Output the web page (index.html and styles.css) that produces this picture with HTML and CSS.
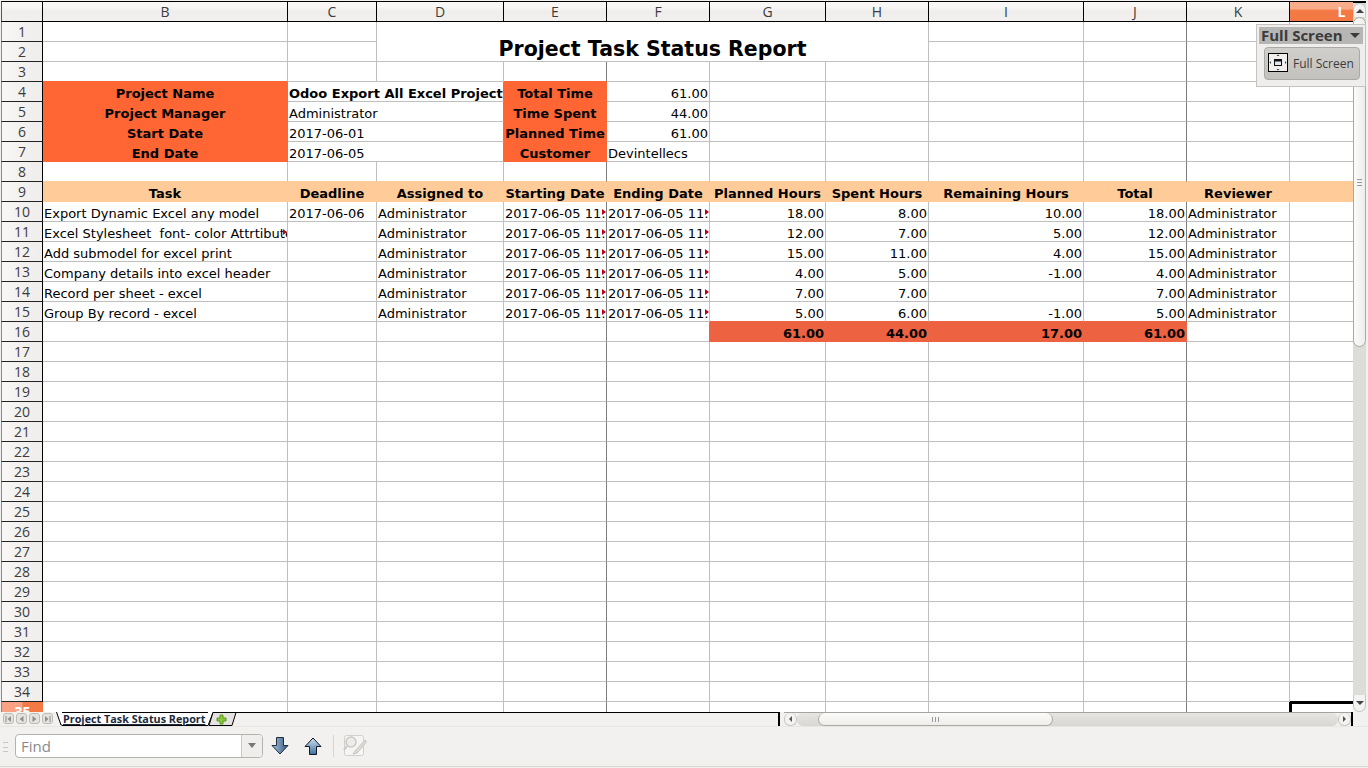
FILE: index.html
```html
<!DOCTYPE html>
<html lang="en">
<head>
  <meta charset="UTF-8">
  <title>Project Task Status Report</title>
  <link rel="stylesheet" href="styles.css">
</head>
<body>
<div class="app">
  <div class="main">
    <div class="sheet">
      <table class="grid">
        <colgroup>
          <col class="w-a"><col class="w-b"><col class="w-c"><col class="w-d"><col class="w-n"><col class="w-n">
          <col class="w-g"><col class="w-n"><col class="w-i"><col class="w-n"><col class="w-n"><col class="w-n">
        </colgroup>
        <thead>
          <tr>
            <th class="corner"></th><th>B</th><th>C</th><th>D</th><th>E</th><th>F</th><th>G</th><th>H</th><th>I</th><th>J</th><th>K</th><th class="col-sel">L</th>
          </tr>
        </thead>
        <tbody>
          <tr><th>1</th><td></td><td></td><td class="title" colspan="5" rowspan="2">Project Task Status Report</td><td></td><td class="dk"></td><td></td><td></td></tr>
          <tr><th>2</th><td></td><td></td><td></td><td class="dk"></td><td></td><td></td></tr>
          <tr><th>3</th><td class="under-org"></td><td></td><td></td><td class="dk under-org"></td><td></td><td></td><td></td><td></td><td class="dk"></td><td></td><td></td></tr>
          <tr><th>4</th><td class="org mid bold">Project Name</td><td class="bold right-org" colspan="2">Odoo Export All Excel Project</td><td class="org mid bold">Total Time</td><td class="num">61.00</td><td></td><td></td><td></td><td class="dk"></td><td></td><td></td></tr>
          <tr><th>5</th><td class="org mid bold">Project Manager</td><td class="right-org" colspan="2">Administrator</td><td class="org mid bold">Time Spent</td><td class="num">44.00</td><td></td><td></td><td></td><td class="dk"></td><td></td><td></td></tr>
          <tr><th>6</th><td class="org mid bold">Start Date</td><td class="right-org" colspan="2">2017-06-01</td><td class="org mid bold">Planned Time</td><td class="num">61.00</td><td></td><td></td><td></td><td class="dk"></td><td></td><td></td></tr>
          <tr><th>7</th><td class="org mid bold">End Date</td><td class="right-org" colspan="2">2017-06-05</td><td class="org mid bold">Customer</td><td>Devintellecs</td><td></td><td></td><td></td><td class="dk"></td><td></td><td></td></tr>
          <tr class="under-pch"><th>8</th><td></td><td></td><td></td><td class="dk"></td><td></td><td></td><td></td><td></td><td class="dk"></td><td></td><td></td></tr>
          <tr class="band"><th>9</th><td>Task</td><td>Deadline</td><td>Assigned to</td><td>Starting Date</td><td>Ending Date</td><td>Planned Hours</td><td>Spent Hours</td><td>Remaining Hours</td><td>Total</td><td>Reviewer</td><td></td></tr>
          <tr><th>10</th><td>Export Dynamic Excel any model</td><td>2017-06-06</td><td>Administrator</td><td class="dk clip">2017-06-05 11:30:00</td><td class="clip">2017-06-05 11:30:00</td><td class="num">18.00</td><td class="num">8.00</td><td class="num">10.00</td><td class="dk num">18.00</td><td>Administrator</td><td></td></tr>
          <tr><th>11</th><td class="clip">Excel Stylesheet  font- color Attrtibute</td><td></td><td>Administrator</td><td class="dk clip">2017-06-05 11:30:00</td><td class="clip">2017-06-05 11:30:00</td><td class="num">12.00</td><td class="num">7.00</td><td class="num">5.00</td><td class="dk num">12.00</td><td>Administrator</td><td></td></tr>
          <tr><th>12</th><td>Add submodel for excel print</td><td></td><td>Administrator</td><td class="dk clip">2017-06-05 11:30:00</td><td class="clip">2017-06-05 11:30:00</td><td class="num">15.00</td><td class="num">11.00</td><td class="num">4.00</td><td class="dk num">15.00</td><td>Administrator</td><td></td></tr>
          <tr><th>13</th><td>Company details into excel header</td><td></td><td>Administrator</td><td class="dk clip">2017-06-05 11:30:00</td><td class="clip">2017-06-05 11:30:00</td><td class="num">4.00</td><td class="num">5.00</td><td class="num">-1.00</td><td class="dk num">4.00</td><td>Administrator</td><td></td></tr>
          <tr><th>14</th><td>Record per sheet - excel</td><td></td><td>Administrator</td><td class="dk clip">2017-06-05 11:30:00</td><td class="clip">2017-06-05 11:30:00</td><td class="num">7.00</td><td class="num">7.00</td><td class="num"></td><td class="dk num">7.00</td><td>Administrator</td><td></td></tr>
          <tr><th>15</th><td>Group By record - excel</td><td></td><td>Administrator</td><td class="dk clip">2017-06-05 11:30:00</td><td class="clip">2017-06-05 11:30:00</td><td class="num under-tot">5.00</td><td class="num under-tot">6.00</td><td class="num under-tot">-1.00</td><td class="dk num under-tot">5.00</td><td>Administrator</td><td></td></tr>
          <tr><th>16</th><td></td><td></td><td></td><td class="dk"></td><td class="right-tot"></td><td class="tot num bold">61.00</td><td class="tot num bold">44.00</td><td class="tot num bold">17.00</td><td class="tot num bold">61.00</td><td></td><td></td></tr>
          <tr><th>17</th><td></td><td></td><td></td><td class="dk"></td><td></td><td></td><td></td><td></td><td class="dk"></td><td></td><td></td></tr>
          <tr><th>18</th><td></td><td></td><td></td><td class="dk"></td><td></td><td></td><td></td><td></td><td class="dk"></td><td></td><td></td></tr>
          <tr><th>19</th><td></td><td></td><td></td><td class="dk"></td><td></td><td></td><td></td><td></td><td class="dk"></td><td></td><td></td></tr>
          <tr><th>20</th><td></td><td></td><td></td><td class="dk"></td><td></td><td></td><td></td><td></td><td class="dk"></td><td></td><td></td></tr>
          <tr><th>21</th><td></td><td></td><td></td><td class="dk"></td><td></td><td></td><td></td><td></td><td class="dk"></td><td></td><td></td></tr>
          <tr><th>22</th><td></td><td></td><td></td><td class="dk"></td><td></td><td></td><td></td><td></td><td class="dk"></td><td></td><td></td></tr>
          <tr><th>23</th><td></td><td></td><td></td><td class="dk"></td><td></td><td></td><td></td><td></td><td class="dk"></td><td></td><td></td></tr>
          <tr><th>24</th><td></td><td></td><td></td><td class="dk"></td><td></td><td></td><td></td><td></td><td class="dk"></td><td></td><td></td></tr>
          <tr><th>25</th><td></td><td></td><td></td><td class="dk"></td><td></td><td></td><td></td><td></td><td class="dk"></td><td></td><td></td></tr>
          <tr><th>26</th><td></td><td></td><td></td><td class="dk"></td><td></td><td></td><td></td><td></td><td class="dk"></td><td></td><td></td></tr>
          <tr><th>27</th><td></td><td></td><td></td><td class="dk"></td><td></td><td></td><td></td><td></td><td class="dk"></td><td></td><td></td></tr>
          <tr><th>28</th><td></td><td></td><td></td><td class="dk"></td><td></td><td></td><td></td><td></td><td class="dk"></td><td></td><td></td></tr>
          <tr><th>29</th><td></td><td></td><td></td><td class="dk"></td><td></td><td></td><td></td><td></td><td class="dk"></td><td></td><td></td></tr>
          <tr><th>30</th><td></td><td></td><td></td><td class="dk"></td><td></td><td></td><td></td><td></td><td class="dk"></td><td></td><td></td></tr>
          <tr><th>31</th><td></td><td></td><td></td><td class="dk"></td><td></td><td></td><td></td><td></td><td class="dk"></td><td></td><td></td></tr>
          <tr><th>32</th><td></td><td></td><td></td><td class="dk"></td><td></td><td></td><td></td><td></td><td class="dk"></td><td></td><td></td></tr>
          <tr><th>33</th><td></td><td></td><td></td><td class="dk"></td><td></td><td></td><td></td><td></td><td class="dk"></td><td></td><td></td></tr>
          <tr><th>34</th><td></td><td></td><td></td><td class="dk"></td><td></td><td></td><td></td><td></td><td class="dk"></td><td></td><td class="above-sel"></td></tr>
          <tr><th class="row-sel">35</th><td></td><td></td><td></td><td class="dk"></td><td></td><td></td><td></td><td></td><td class="dk"></td><td></td><td class="cell-sel"></td></tr>
        </tbody>
      </table>
    </div>
    <div class="vscroll">
      <div class="v-btn"><span class="tri-up"></span></div>
      <div class="v-thumb"><span class="grip-h"></span></div>
      <div class="v-trough"></div>
      <div class="v-btn v-btn-down"><span class="tri-down"></span></div>
    </div>
  </div>

  <div class="tabrow">
    <div class="strip">
      <div class="nav">
        <span class="nav-btn"><svg width="9" height="10" viewBox="0 0 9 10"><path d="M1.5 2h1v6h-1Z M7 2v6L3.5 5Z" fill="#8f8e8a"/></svg></span>
        <span class="nav-btn"><svg width="9" height="10" viewBox="0 0 9 10"><path d="M6.5 2v6L2.5 5Z" fill="#8f8e8a"/></svg></span>
        <span class="nav-btn"><svg width="9" height="10" viewBox="0 0 9 10"><path d="M2.5 2v6L6.5 5Z" fill="#8f8e8a"/></svg></span>
        <span class="nav-btn"><svg width="9" height="10" viewBox="0 0 9 10"><path d="M6.5 2h1v6h-1Z M2 2v6L5.5 5Z" fill="#8f8e8a"/></svg></span>
      </div>
      <svg class="slope" width="6" height="14" viewBox="0 0 6 14"><path d="M0 0 L5 13 L6 13 L6 0 Z" fill="#fff"/><path d="M0.5 0 L5 13 L6 13" fill="none" stroke="#000"/></svg>
      <span class="tab">Project Task Status Report</span>
      <svg class="add" width="32" height="14" viewBox="0 0 32 14">
        <path d="M0 13 L5 0 L0 0 Z" fill="#fff"/>
        <path d="M0 13.5 L5 0.5" fill="none" stroke="#000"/>
        <path d="M5 0.5 L28 0.5 L24 13.5 L1 13.5 Z" fill="#e4e3e0" stroke="#000"/>
        <path d="M12 3 h3 v3 h3 v3 h-3 v3 h-3 v-3 h-3 v-3 h3 Z" fill="#8cc63f" stroke="#5c9a22"/>
      </svg>
    </div>
    <div class="hscroll">
      <div class="h-btn"><span class="tri-left"></span></div>
      <div class="h-trough"><div class="h-thumb"><span class="grip-v"></span></div></div>
      <div class="h-btn"><span class="tri-right"></span></div>
    </div>
    <div class="tab-end"></div>
  </div>

  <div class="findbar">
    <span class="dots"></span>
    <div class="find">
      <span class="find-text">Find</span>
      <span class="find-drop"><span class="tri-down dim"></span></span>
    </div>
    <svg class="ico-down" width="18" height="18" viewBox="0 0 18 18">
      <defs>
        <linearGradient id="blueDown" x1="0" y1="0" x2="1" y2="0"><stop offset="0" stop-color="#a9c4dd"/><stop offset="1" stop-color="#33597f"/></linearGradient>
        <linearGradient id="blueUp" x1="0" y1="1" x2="0" y2="0"><stop offset="0" stop-color="#3f6f9d"/><stop offset="1" stop-color="#cfe2f2"/></linearGradient>
      </defs>
      <path d="M5.5 0.5 H12.5 V8.5 H17 L9 17 L1 8.5 H5.5 Z" fill="url(#blueDown)" stroke="#1f2d3d"/>
    </svg>
    <svg class="ico-up" width="18" height="18" viewBox="0 0 18 18">
      <path d="M5.5 17.5 H12.5 V9.5 H17 L9 1 L1 9.5 H5.5 Z" fill="url(#blueUp)" stroke="#10171f"/>
    </svg>
    <span class="sep"></span>
    <svg class="ico-form" width="24" height="24" viewBox="0 0 24 24">
      <rect x="1.5" y="1.5" width="19" height="20" rx="2" fill="#f6f5f3" stroke="#d2d0cc"/>
      <circle cx="8" cy="8" r="5" fill="#eeecea" stroke="#cac8c4" stroke-width="1.5"/>
      <path d="M4 12 L1 16" stroke="#cac8c4" stroke-width="2"/>
      <path d="M22 6 L12 17 L10 20 L14 19 L23.5 8 Z" fill="#dddbd7" stroke="#c6c4c0"/>
    </svg>
  </div>

  <div class="fs-panel">
    <div class="fs-title"><span>Full Screen</span><span class="tri-down fs-tri"></span></div>
    <div class="fs-btn">
      <span class="fs-icon">
        <svg width="18" height="17" viewBox="0 0 18 17">
          <rect x="5.5" y="5.5" width="7" height="6" fill="#dfe6ee" stroke="#111"/>
          <path d="M5.5 6.5 h7" stroke="#111" stroke-width="2"/>
          <path d="M9 0.5 l-1.5 1.5 h3 Z M9 16.5 l-1.5 -1.5 h3 Z M0.5 8.5 l1.5 -1.5 v3 Z M17.5 8.5 l-1.5 -1.5 v3 Z" fill="#444"/>
        </svg>
      </span>
      <span class="fs-label">Full Screen</span>
    </div>
  </div>
</div>
</body>
</html>
```

FILE: styles.css
```css
* {
  box-sizing: border-box;
}
html, body {
  margin: 0;
  padding: 0;
  height: 100%;
  overflow: hidden;
}
body {
  background-color: #f2f1f0;
  font-family: "DejaVu Sans", sans-serif;
  color: #000;
}
.app {
  position: relative;
  display: flex;
  flex-direction: column;
  width: 1368px;
  height: 768px;
}

/* sheet area */
.main {
  display: flex;
  height: 712px;
  flex: none;
}
.sheet {
  width: 1353px;
  height: 712px;
  padding: 1px 0 0 1px;
  overflow: hidden;
  flex: none;
}
.grid {
  table-layout: fixed;
  width: 1392px;
  border-collapse: separate;
  border-spacing: 0;
  background-color: #fff;
  font-size: 13px;
}
.w-a { width: 42px; }
.w-b { width: 245px; }
.w-c { width: 89px; }
.w-d { width: 127px; }
.w-n { width: 103px; }
.w-g { width: 116px; }
.w-i { width: 155px; }

.grid th {
  font-family: "Open Sans", sans-serif;
  font-weight: 400;
  font-size: 14px;
  color: #3c3c3c;
  text-align: center;
  padding: 0;
}
.grid thead th {
  height: 21px;
  line-height: 19px;
  border-top: 1px solid #000;
  border-bottom: 1px solid #000;
  border-right: 1px solid #000;
  background: linear-gradient(#f8f7f6 0, #f8f7f6 25%, #efeeec 50%, #f1f0ee 100%);
}
.grid thead th.corner {
  border-left: 1px solid #555;
}
.grid thead th.col-sel {
  border-right: none;
  color: #fff;
  font-weight: 700;
  background: linear-gradient(#f9ac8a 0, #f9ac8a 35%, #f47a45 45%, #f47a45 100%);
}
.grid tbody th {
  height: 20px;
  line-height: 19px;
  border-left: 1px solid #888;
  border-right: 1px solid #000;
  border-bottom: 1px solid #222;
  background: linear-gradient(90deg, #f8f7f6 0, #f2f1ef 50%, #efeeec 100%);
}
.grid tbody th.row-sel {
  color: #fff;
  font-weight: 700;
  border-right: none;
  background: linear-gradient(90deg, #f9a283 0, #f9a283 48%, #f47a45 52%, #f47a45 100%);
}
.grid td {
  height: 20px;
  padding: 0 1px;
  line-height: 15px;
  vertical-align: bottom;
  white-space: pre;
  border-right: 1px solid #c0c0c0;
  border-bottom: 1px solid #c0c0c0;
}
.grid td.dk {
  border-right-color: #7f7f7f;
}
.grid td.num {
  text-align: right;
}
.grid td.mid {
  text-align: center;
}
.grid td.bold {
  font-weight: 700;
}
.grid td.title {
  font-size: 20.5px;
  font-weight: 700;
  text-align: center;
  vertical-align: middle;
  padding-top: 15px;
  padding-bottom: 0;
}
.grid td.org {
  background-color: #ff6633;
  border-color: #ff6633;
}
.grid td.under-org {
  border-bottom-color: #ff6633;
}
.grid td.right-org {
  border-right-color: #ff6633;
}
.grid .under-pch td {
  border-bottom-color: #ffcc99;
}
.grid .band td {
  background-color: #ffcc99;
  border-color: #ffcc99;
  font-weight: 700;
  text-align: center;
}
.grid td.tot {
  background-color: #ed6240;
  border-color: #ed6240;
}
.grid td.under-tot {
  border-bottom-color: #ed6240;
}
.grid td.right-tot {
  border-right-color: #ed6240;
}
.grid td.clip {
  position: relative;
  overflow: hidden;
}
.grid td.clip::after {
  content: "";
  position: absolute;
  right: 0;
  top: 7px;
  width: 0;
  height: 0;
  border-left: 4px solid #b8001c;
  border-top: 3px solid transparent;
  border-bottom: 3px solid transparent;
}
.grid td.above-sel {
  border-bottom-color: #000;
}
.grid td.cell-sel {
  border-right: none;
  box-shadow: -1px 0 0 #000, inset 2px 2px 0 #000;
}

/* triangles */
.tri-up, .tri-down, .tri-left, .tri-right {
  display: inline-block;
  width: 0;
  height: 0;
}
.tri-up {
  border-left: 4px solid transparent;
  border-right: 4px solid transparent;
  border-bottom: 4px solid #444;
}
.tri-down {
  border-left: 4px solid transparent;
  border-right: 4px solid transparent;
  border-top: 4px solid #444;
}
.tri-left {
  border-top: 3px solid transparent;
  border-bottom: 3px solid transparent;
  border-right: 3px solid #555;
}
.tri-right {
  border-top: 3px solid transparent;
  border-bottom: 3px solid transparent;
  border-left: 3px solid #555;
}

/* vertical scrollbar */
.vscroll {
  width: 13px;
  margin-right: 2px;
  margin-top: 1px;
  display: flex;
  flex-direction: column;
  flex: none;
  background-color: #dddcd8;
  border-top: 2px solid #000;
  border-radius: 0 0 7px 7px;
}
.v-btn {
  height: 14px;
  flex: none;
  display: flex;
  align-items: center;
  justify-content: center;
  background-color: #f4f3f1;
  border: 1px solid #c8c7c3;
  border-bottom: none;
  border-radius: 7px 7px 0 0;
}
.v-btn-down {
  height: 17px;
  border: 1px solid #c8c7c3;
  border-top: none;
  border-radius: 0 0 7px 7px;
}
.v-thumb {
  height: 330px;
  flex: none;
  display: flex;
  align-items: center;
  justify-content: center;
  background: linear-gradient(90deg, #fbfbfa, #eeedea);
  border: 1px solid #a9a8a4;
  border-radius: 7px;
}
.grip-h {
  width: 5px;
  height: 7px;
  border-top: 1px solid #999;
  border-bottom: 1px solid #999;
  background: linear-gradient(#999, #999) center / 100% 1px no-repeat;
}
.v-trough {
  flex: 1;
}

/* tab row */
.tabrow {
  height: 14px;
  flex: none;
  display: flex;
  align-items: stretch;
}
.strip {
  width: 780px;
  flex: none;
  display: flex;
  align-items: flex-start;
  padding-left: 3px;
  background: linear-gradient(90deg, transparent 0, transparent 57px, #000 57px, #000 100%) top / 100% 1px no-repeat;
  border-right: 2px solid #000;
  border-bottom: 0;
}
.nav {
  display: flex;
  gap: 2px;
  width: 53px;
  flex: none;
  padding-top: 1px;
}
.nav-btn {
  width: 11px;
  height: 11px;
  display: flex;
  align-items: center;
  justify-content: center;
  background-color: #e4e3e0;
  border: 1px solid #bdbcb8;
  border-radius: 3px;
}
.slope {
  flex: none;
}
.tab {
  width: 146px;
  height: 14px;
  flex: none;
  padding-left: 1px;
  background-color: #fff;
  border-top: 1px solid #000;
  border-bottom: 1px solid #000;
  font-family: "Open Sans", sans-serif;
  font-size: 10.8px;
  font-weight: 700;
  line-height: 12px;
  color: #1d2a3c;
  text-decoration: underline;
  white-space: nowrap;
}
.add {
  flex: none;
}
.hscroll {
  width: 567px;
  margin-left: 4px;
  flex: none;
  display: flex;
  border-top: 1px solid #a5a4a0;
}
.h-btn {
  width: 13px;
  flex: none;
  display: flex;
  align-items: center;
  justify-content: center;
  background-color: #f4f3f1;
  border: 1px solid #c8c7c3;
  border-top: none;
  border-radius: 6px;
}
.h-trough {
  flex: 1;
  padding-left: 21px;
  background: linear-gradient(#e6e5e2, #d8d7d3);
  border-radius: 6px;
}
.h-thumb {
  width: 235px;
  height: 13px;
  display: flex;
  align-items: center;
  justify-content: center;
  background: linear-gradient(#fbfbfa, #eeedea);
  border: 1px solid #a9a8a4;
  border-top: none;
  border-radius: 7px;
}
.grip-v {
  width: 7px;
  height: 5px;
  border-left: 1px solid #999;
  border-right: 1px solid #999;
  background: linear-gradient(#999, #999) center / 1px 100% no-repeat;
}
.tab-end {
  width: 2px;
  height: 14px;
  flex: none;
  background-color: #000;
}

/* find toolbar */
.findbar {
  flex: 1;
  display: flex;
  align-items: center;
  padding: 0 0 2px 15px;
  border-top: 1px solid #e8e6e3;
  border-bottom: 1px solid #d9d5d0;
  margin-bottom: 1px;
  position: relative;
}
.dots {
  position: absolute;
  left: 3px;
  top: 15px;
  width: 5px;
  height: 10px;
  border-top: 1px solid #c9c7c3;
  border-bottom: 1px solid #c9c7c3;
  background: linear-gradient(#c9c7c3, #c9c7c3) center / 100% 1px no-repeat;
}
.find {
  width: 248px;
  height: 24px;
  flex: none;
  display: flex;
  background-color: #fff;
  border: 1px solid #b5b3ae;
  border-radius: 4px;
  overflow: hidden;
}
.find-text {
  flex: 1;
  padding-left: 5px;
  font-family: "Open Sans", sans-serif;
  font-size: 15px;
  line-height: 22px;
  color: #8a8a8c;
}
.find-drop {
  width: 21px;
  flex: none;
  display: flex;
  align-items: center;
  justify-content: center;
  background-color: #efeeec;
  border-left: 1px solid #c9c7c3;
}
.dim {
  border-top-color: #777;
  border-left-width: 4.5px;
  border-right-width: 4.5px;
  border-top-width: 5px;
}
.ico-down {
  margin-left: 8px;
  flex: none;
}
.ico-up {
  margin-left: 15px;
  flex: none;
}
.sep {
  width: 1px;
  height: 22px;
  margin-left: 11px;
  flex: none;
  background-color: #d8d6d2;
}
.ico-form {
  margin-left: 9px;
  flex: none;
}

/* floating full screen toolbar */
.fs-panel {
  position: absolute;
  left: 1256px;
  top: 24px;
  width: 110px;
  height: 63px;
  padding: 2px;
  background-color: #efeeec;
  border: 1px solid #c4c3bf;
}
.fs-title {
  height: 17px;
  display: flex;
  align-items: center;
  justify-content: space-between;
  padding: 0 3px 1px 2px;
  background-color: #b6b6b4;
  font-family: "Open Sans", sans-serif;
  font-size: 15px;
  line-height: 16px;
  font-weight: 700;
  color: #3b3b3b;
}
.fs-tri {
  border-left-width: 5px;
  border-right-width: 5px;
  border-top-width: 5px;
  border-top-color: #3b3b3b;
}
.fs-btn {
  height: 33px;
  margin: 3px 3px 0 5px;
  display: flex;
  align-items: center;
  gap: 5px;
  padding-left: 3px;
  background: linear-gradient(#d0cfcc, #c2c1be);
  border: 1px solid #aaa9a5;
  border-radius: 4px;
}
.fs-icon {
  width: 20px;
  height: 19px;
  margin-bottom: 2px;
  flex: none;
  display: block;
  background-color: #f0efed;
  border: 1px solid #000;
}
.fs-icon svg {
  display: block;
}
.fs-label {
  font-family: "Open Sans", sans-serif;
  font-size: 12px;
  color: #3c3c3c;
  white-space: nowrap;
}
```
